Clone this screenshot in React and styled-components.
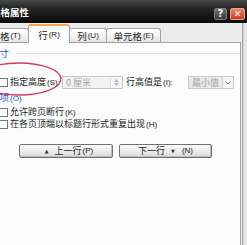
import React from 'react';
import styled, { createGlobalStyle } from 'styled-components';

const GlobalStyle = createGlobalStyle`
  html, body {
    margin: 0;
    padding: 0;
    width: 247px;
    height: 245px;
    overflow: hidden;
    background: #ebebeb;
  }
  body {
    font-family: "Noto Sans CJK SC", "Liberation Sans", sans-serif;
    font-size: 9px;
    color: #1a1a1a;
  }
`;

export default function App() {
  return (
    <>
      <GlobalStyle />
      <Window>
        <TitleBar>
          <Title>表格属性</Title>
          <TitleButtons>
            <HelpBtn>?</HelpBtn>
            <CloseBtn>✕</CloseBtn>
          </TitleButtons>
        </TitleBar>
        <Body>
          <Content>
            <TabStrip>
              <Tab $width={47}>表格<Key>(T)</Key></Tab>
              <Tab $width={42} $active>行<Key>(R)</Key></Tab>
              <Tab $width={38}>列<Key>(U)</Key></Tab>
              <Tab $width={55}>单元格<Key>(E)</Key></Tab>
            </TabStrip>
            <Panel>
              <GroupHeader>
                <GroupLabel>尺寸</GroupLabel>
                <GroupLine />
              </GroupHeader>
              <HeightRow>
                <CheckBox />
                <Label $width={52}>指定高度<Key>(S):</Key></Label>
                <Spin>
                  <SpinText>0 厘米</SpinText>
                  <SpinArrows>
                    <Arrow viewBox="0 0 5 3"><path d="M0 3 L2.5 0 L5 3 Z" /></Arrow>
                    <Arrow viewBox="0 0 5 3"><path d="M0 0 L2.5 3 L5 0 Z" /></Arrow>
                  </SpinArrows>
                </Spin>
                <Label $width={60} $gap={3}>行高值是<Key>(I):</Key></Label>
                <Select>
                  <SpinText>最小值</SpinText>
                  <SelectArrow>
                    <svg width="6" height="4" viewBox="0 0 6 4">
                      <path d="M0.5 0.5 L3 3 L5.5 0.5" fill="none" stroke="#8a8a8a" strokeWidth="1" />
                    </svg>
                  </SelectArrow>
                </Select>
              </HeightRow>
              <GroupHeader $top={3}>
                <GroupLabel>选项<Key>(O)</Key></GroupLabel>
              </GroupHeader>
              <CheckRow $top={2}>
                <CheckBox />
                <Label>允许跨页断行<Key>(K)</Key></Label>
              </CheckRow>
              <CheckRow>
                <CheckBox />
                <Label>在各页顶端以标题行形式重复出现<Key>(H)</Key></Label>
              </CheckRow>
              <ButtonRow>
                <PushButton $width={94}>
                  <Tri>▲</Tri>上一行<Key>(P)</Key>
                </PushButton>
                <PushButton $width={93}>
                  下一行<Tri>▼</Tri><Key>(N)</Key>
                </PushButton>
              </ButtonRow>
              <Mark viewBox="0 0 100 40">
                <ellipse cx="42" cy="19" rx="42" ry="16" fill="none" stroke="#d33a5c" strokeWidth="1.3" />
              </Mark>
            </Panel>
          </Content>
          <FrameEdge />
        </Body>
      </Window>
    </>
  );
}

const Window = styled.div`
  width: 267px;
  height: 245px;
  margin-left: -20px;
  display: flex;
  flex-direction: column;
  background: #ebebeb;
`;

const TitleBar = styled.div`
  height: 23px;
  flex-shrink: 0;
  display: flex;
  align-items: center;
  padding: 0 2px 0 11px;
  background: linear-gradient(to bottom, #4a4a4a 0%, #2a2a2a 30%, #151515 70%, #0c0c0c 100%);
`;

const Title = styled.div`
  color: #fff;
  font-weight: bold;
  font-size: 9.5px;
  line-height: 12px;
`;

const TitleButtons = styled.div`
  margin-left: auto;
  align-self: flex-end;
  margin-bottom: 3px;
  display: flex;
  gap: 3px;
`;

const HelpBtn = styled.div`
  width: 13px;
  height: 12px;
  box-sizing: border-box;
  border: 1px solid #7c7c7c;
  border-radius: 2px;
  background: linear-gradient(to bottom, #6e6e6e, #3a3a3a);
  color: #f4f4f4;
  font: bold 10px/10px "DejaVu Sans", sans-serif;
  text-align: center;
`;

const CloseBtn = styled.div`
  width: 15px;
  height: 12px;
  box-sizing: border-box;
  border: 1px solid #e9a08a;
  border-radius: 2px;
  background: linear-gradient(to bottom, #ee8466, #cc3b20);
  color: #fff;
  font: bold 9px/10px "DejaVu Sans", sans-serif;
  text-align: center;
`;

const Body = styled.div`
  flex: 1;
  display: flex;
`;

const Content = styled.div`
  flex: 1;
  display: flex;
  flex-direction: column;
`;

const FrameEdge = styled.div`
  width: 6px;
  background: linear-gradient(to right, #f3f3f3 0 1px, #9d9d9d 1px 2px, #d6d6d6 2px 3px, #e6e6e6 3px);
`;

const TabStrip = styled.div`
  height: 20px;
  flex-shrink: 0;
  display: flex;
  align-items: flex-end;
  padding-left: 3px;
  position: relative;
  z-index: 1;
  margin-bottom: -1px;
`;

const Tab = styled.div`
  width: ${(p) => p.$width}px;
  height: ${(p) => (p.$active ? 19 : 15)}px;
  box-sizing: border-box;
  display: flex;
  align-items: center;
  justify-content: center;
  border: 1px solid #9fa3a8;
  border-bottom: ${(p) => (p.$active ? 'none' : '1px solid #a0a0a0')};
  border-top: ${(p) => (p.$active ? '2px solid #f0ad3c' : '1px solid #9fa3a8')};
  border-radius: 3px 3px 0 0;
  margin-left: -1px;
  background: ${(p) =>
    p.$active ? '#fcfcfc' : 'linear-gradient(to bottom, #ffffff, #f1f1f1 60%, #e4e4e4)'};
  font-size: 9.5px;
  line-height: 12px;
  padding-top: ${(p) => (p.$active ? 0 : 1)}px;
`;

const Key = styled.span`
  font-family: "Liberation Sans", sans-serif;
  font-size: 8px;
  margin-left: 1px;
`;

const Panel = styled.div`
  flex: 1;
  position: relative;
  box-sizing: border-box;
  margin-left: 3px;
  border: 1px solid #9fa3a8;
  border-bottom: none;
  background: #fcfcfc;
  padding-left: 6px;
  display: flex;
  flex-direction: column;
`;

const GroupHeader = styled.div`
  height: 12px;
  margin-top: ${(p) => p.$top ?? 4}px;
  display: flex;
  align-items: center;
`;

const GroupLabel = styled.div`
  color: #2457c8;
  font-size: 9.5px;
  line-height: 12px;
  white-space: nowrap;
`;

const GroupLine = styled.div`
  flex: 1;
  height: 1px;
  margin-left: 8px;
  background: #dcdcdc;
`;

const HeightRow = styled.div`
  height: 13px;
  margin-top: 17px;
  display: flex;
  align-items: center;
`;

const CheckRow = styled.div`
  height: 12px;
  margin-top: ${(p) => p.$top ?? 0}px;
  display: flex;
  align-items: center;
`;

const CheckBox = styled.div`
  width: 9px;
  height: 9px;
  box-sizing: border-box;
  margin-left: 9px;
  border: 1px solid #6f7680;
  background: #fff;
  flex-shrink: 0;
`;

const Label = styled.div`
  margin-left: ${(p) => p.$gap ?? 2}px;
  width: ${(p) => (p.$width ? `${p.$width}px` : 'auto')};
  white-space: nowrap;
  line-height: 12px;
  flex-shrink: 0;
`;

const Spin = styled.div`
  width: 61px;
  height: 13px;
  box-sizing: border-box;
  border: 1px solid #c3c6cb;
  background: #f2f2f2;
  display: flex;
  align-items: center;
  flex-shrink: 0;
`;

const SpinText = styled.div`
  flex: 1;
  color: #a4a4a4;
  padding-left: 3px;
  line-height: 11px;
  white-space: nowrap;
`;

const SpinArrows = styled.div`
  width: 11px;
  height: 100%;
  display: flex;
  flex-direction: column;
  align-items: center;
  justify-content: center;
  gap: 1px;
  border-left: 1px solid #e0e0e0;
  background: #f7f7f7;
`;

const Arrow = styled.svg`
  width: 5px;
  height: 3px;
  fill: #b8b8b8;
`;

const Select = styled.div`
  width: 46px;
  height: 13px;
  margin-left: 2px;
  box-sizing: border-box;
  border: 1px solid #c9cbcf;
  background: #e9e9e9;
  display: flex;
  align-items: center;
  flex-shrink: 0;
`;

const SelectArrow = styled.div`
  width: 10px;
  height: 100%;
  display: flex;
  align-items: center;
  justify-content: center;
  background: #f4f4f4;
  border-left: 1px solid #d2d2d2;
`;

const ButtonRow = styled.div`
  display: flex;
  gap: 6px;
  margin-top: 14px;
  padding-left: 29px;
`;

const PushButton = styled.div`
  width: ${(p) => p.$width}px;
  height: 14px;
  box-sizing: border-box;
  border: 1px solid #707070;
  border-radius: 2px;
  background: linear-gradient(to bottom, #fafafa, #ececec 50%, #d9d9d9);
  box-shadow: inset -1px -1px 0 #bdbdbd;
  display: flex;
  align-items: center;
  justify-content: center;
  line-height: 12px;
  white-space: nowrap;
`;

const Tri = styled.span`
  font-family: "DejaVu Sans", sans-serif;
  font-size: 5px;
  margin: 0 6px;
  color: #333;
`;

const Mark = styled.svg`
  position: absolute;
  left: -7px;
  top: 17px;
  width: 100px;
  height: 40px;
  overflow: visible;
`;
